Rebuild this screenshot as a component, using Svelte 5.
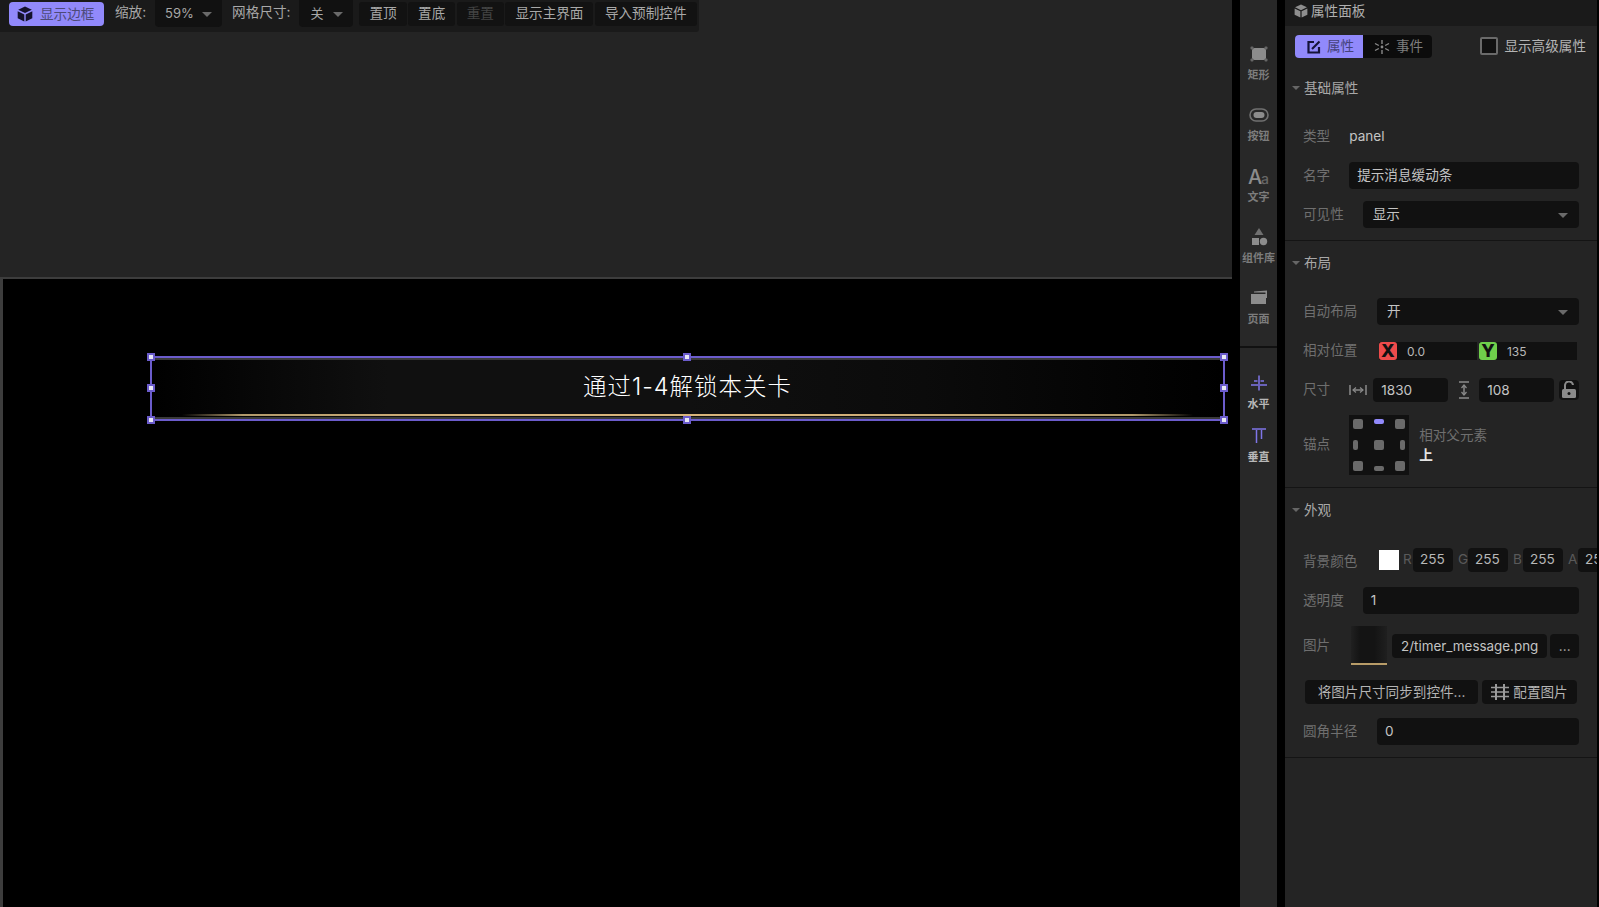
<script>
  const tools = [
    { id: 'rect', label: '矩形' },
    { id: 'btn', label: '按钮' },
    { id: 'text', label: '文字' },
    { id: 'lib', label: '组件库' },
    { id: 'page', label: '页面' }
  ];
  const anchors = ['tl', 'tc', 'tr', 'ml', 'mc', 'mr', 'bl', 'bc', 'br'];
  const handles = ['h-tl', 'h-tc', 'h-tr', 'h-ml', 'h-mr', 'h-bl', 'h-bc', 'h-br'];
  const rgba = [['R', 255], ['G', 255], ['B', 255], ['A', 255]];
</script>

{#snippet cube(size)}
  <svg width={size} height={size} viewBox="0 0 16 16" fill="currentColor">
    <path d="M8 0.500 14.800 3.800 8 7 1.200 3.800Z" />
    <path d="M0.700 5.200 7.300 8.400V15.500L0.700 12.200Z" />
    <path d="M15.300 5.200 8.700 8.400V15.500L15.300 12.200Z" />
  </svg>
{/snippet}

{#snippet caret()}
  <span class="caret"></span>
{/snippet}

<div class="app">
  <main class="canvas">
    <div class="toolbar">
      <button class="show-frame">{@render cube(16)}<span>显示边框</span></button>
      <span class="tb-label zoom-label">缩放:</span>
      <div class="tb-select zoom-select"><span>59%</span>{@render caret()}</div>
      <span class="tb-label grid-label">网格尺寸:</span>
      <div class="tb-select grid-select"><span>关</span>{@render caret()}</div>
      <div class="tb-actions">
        <button class="tb-btn">置顶</button>
        <button class="tb-btn">置底</button>
        <button class="tb-btn off">重置</button>
        <button class="tb-btn">显示主界面</button>
        <button class="tb-btn">导入预制控件</button>
      </div>
    </div>
    <div class="stage">
      <div class="widget">
        <div class="glow"></div>
        <div class="top-edge"></div>
        <div class="bottom-edge"></div>
        <div class="gold"></div>
        <div class="title">通过1-4解锁本关卡</div>
        {#each handles as h}
          <span class="handle {h}"></span>
        {/each}
      </div>
    </div>
  </main>

  <aside class="strip">
    <div class="tool-group first">
      {#each tools as t}
        <div class="tool">
          <svg class="tool-icon" width="24" height="24" viewBox="0 0 24 24" fill="#8c8c8c">
            {#if t.id === 'rect'}
              <rect x="5" y="6" width="14" height="12" rx="2.500" />
              <rect x="3.500" y="4.500" width="3" height="3" rx="1" fill="#666" />
              <rect x="17.500" y="4.500" width="3" height="3" rx="1" fill="#666" />
              <rect x="3.500" y="16.500" width="3" height="3" rx="1" fill="#666" />
              <rect x="17.500" y="16.500" width="3" height="3" rx="1" fill="#666" />
            {:else if t.id === 'btn'}
              <rect x="3" y="6" width="18" height="12" rx="6" fill="none" stroke="#707070" stroke-width="1.600" />
              <rect x="6.500" y="9" width="11" height="6" rx="3" />
            {:else if t.id === 'text'}
              <text x="1" y="20" class="aa-big">A</text>
              <text x="14" y="20" class="aa-small">a</text>
            {:else if t.id === 'lib'}
              <path d="M12 3 16.500 10H7.500Z" fill="#707070" />
              <rect x="5" y="13" width="7" height="7" />
              <circle cx="16.500" cy="16.500" r="3.700" />
            {:else}
              <path d="M7 5.500 20 4.500V12H18.500V6.500H7Z" />
              <rect x="4" y="8" width="15" height="10" />
            {/if}
          </svg>
          <span class="tool-label">{t.label}</span>
        </div>
      {/each}
    </div>
    <div class="tool-group second">
      <div class="tool short">
        <svg class="tool-icon" width="24" height="24" viewBox="0 0 24 24" fill="none" stroke="#7f75e8" stroke-width="1.500">
          <path d="M12 4.500V19.500" /><path d="M4 14H20" stroke-dasharray="7 2 7" /><path d="M7 10H17" stroke-dasharray="3.500 3 3.500" />
        </svg>
        <span class="tool-label on">水平</span>
      </div>
      <div class="tool short">
        <svg class="tool-icon" width="24" height="24" viewBox="0 0 24 24" fill="none" stroke="#7f75e8" stroke-width="1.500">
          <path d="M5 5H19" /><path d="M9.500 6V19" /><path d="M14.500 6V15" />
        </svg>
        <span class="tool-label on">垂直</span>
      </div>
    </div>
  </aside>

  <aside class="panel">
    <header class="panel-head">{@render cube(14)}<span>属性面板</span></header>

    <div class="tabs-row">
      <div class="tabs">
        <div class="tab active">
          <svg width="14" height="14" viewBox="0 0 14 14" fill="none" stroke="#15133a" stroke-width="2.200">
            <path d="M7 2H1.500V12.500H12V7" /><path d="M5 9 12.500 1.500" />
          </svg>
          <span>属性</span>
        </div>
        <div class="tab">
          <svg width="16" height="16" viewBox="0 0 16 16" fill="none" stroke="#8a8a8a" stroke-width="1.400">
            <path d="M8 1V5M8 11V15M1 4.500 4.800 6.500M11.200 9.500 15 11.500M1 11.500 4.800 9.500M11.200 6.500 15 4.500" />
            <circle cx="8" cy="8" r="1.400" fill="#8a8a8a" stroke="none" />
          </svg>
          <span>事件</span>
        </div>
      </div>
      <label class="advanced"><span class="check"></span><span class="adv-text">显示高级属性</span></label>
    </div>

    <section class="section">
      <h3 class="sec-title">{@render caret()}<span>基础属性</span></h3>
      <div class="rows">
        <div class="row"><span class="lab">类型</span><span class="val">panel</span></div>
        <div class="row"><span class="lab">名字</span><div class="field">提示消息缓动条</div></div>
        <div class="row"><span class="lab">可见性</span><div class="field sel"><span class="up">显示</span>{@render caret()}</div></div>
      </div>
    </section>

    <section class="section">
      <h3 class="sec-title">{@render caret()}<span>布局</span></h3>
      <div class="rows">
        <div class="row"><span class="lab w4">自动布局</span><div class="field sel"><span class="up">开</span>{@render caret()}</div></div>
        <div class="row">
          <span class="lab w4">相对位置</span>
          <div class="axes">
            <div class="axis"><span class="badge x">X</span><span class="axis-val">0.0</span></div>
            <div class="axis"><span class="badge y">Y</span><span class="axis-val">135</span></div>
          </div>
        </div>
        <div class="row">
          <span class="lab">尺寸</span>
          <svg class="size-w" width="18" height="12" viewBox="0 0 18 12" fill="none" stroke="#8a8a8a" stroke-width="1.500">
            <path d="M1 1V11M17 1V11M4 6H14" /><path d="M7 3.500 4 6l3 2.500M11 3.500 14 6l-3 2.500" stroke-width="1.200" />
          </svg>
          <div class="field small size-a">1830</div>
          <svg class="size-h" width="12" height="18" viewBox="0 0 12 18" fill="none" stroke="#8a8a8a" stroke-width="1.500">
            <path d="M1 1H11M1 17H11M6 4V14" /><path d="M3.500 7 6 4l2.500 3M3.500 11 6 14l2.500-3" stroke-width="1.200" />
          </svg>
          <div class="field small size-b">108</div>
          <div class="lock">
            <svg width="16" height="18" viewBox="0 0 16 18" fill="none">
              <rect x="1" y="8" width="14" height="9" rx="1.500" fill="#8a8a8a" />
              <path d="M4 8V5A4 4 0 0 1 12 4" stroke="#8a8a8a" stroke-width="2" />
              <circle cx="8" cy="12.500" r="1.500" fill="#111" />
            </svg>
          </div>
        </div>
        <div class="row anchor-row">
          <span class="lab">锚点</span>
          <div class="anchor-grid">
            {#each anchors as a}
              <span class="a {a}"></span>
            {/each}
          </div>
          <div class="anchor-info">
            <span class="rel">相对父元素</span>
            <strong class="side">上</strong>
          </div>
        </div>
      </div>
    </section>

    <section class="section">
      <h3 class="sec-title">{@render caret()}<span>外观</span></h3>
      <div class="rows">
        <div class="row color-row">
          <span class="lab w4">背景颜色</span>
          <span class="swatch"></span>
          {#each rgba as [k, v]}
            <span class="chan">{k}</span><span class="chan-val">{v}</span>
          {/each}
        </div>
        <div class="row"><span class="lab">透明度</span><div class="field num">1</div></div>
        <div class="row image-row">
          <span class="lab image-lab">图片</span>
          <div class="thumb"></div>
          <div class="file">2/timer_message.png</div>
          <div class="more">...</div>
        </div>
        <div class="row btn-row">
          <div class="wide-btn sync">将图片尺寸同步到控件...</div>
          <div class="wide-btn conf">
            <svg width="18" height="16" viewBox="0 0 18 16" fill="none" stroke="#9a9a9a" stroke-width="2">
              <path d="M0 3.500H18M0 8H18M0 12.500H18" stroke-width="1.500" /><path d="M5 0V16M13 0V16" />
            </svg>
            <span>配置图片</span>
          </div>
        </div>
        <div class="row"><span class="lab w4">圆角半径</span><div class="field num">0</div></div>
      </div>
    </section>
  </aside>
</div>

<style>
  :global(body) {
    margin: 0;
    background: #000;
    overflow: hidden;
  }
  .app {
    display: flex;
    width: 1599px;
    height: 907px;
    overflow: hidden;
    background: #000;
    font-family: "Inter", "Noto Sans CJK SC", sans-serif;
    font-size: 13.6px;
    color: #b4b4b4;
  }
  button {
    font: inherit;
    border: 0;
    padding: 0;
  }

  /* canvas */
  .canvas {
    position: relative;
    width: 1232px;
    flex: none;
    display: flex;
    flex-direction: column;
    padding-top: 277px;
    box-sizing: border-box;
    background: #242424;
  }
  .toolbar {
    position: absolute;
    left: 0;
    top: 0;
    width: 699px;
    height: 32px;
    box-sizing: border-box;
    padding: 2px 0 0 9px;
    display: flex;
    align-items: flex-start;
    background: #1a1a1a;
    border-radius: 0 0 3px 0;
  }
  .show-frame {
    width: 95px;
    height: 24px;
    padding: 0 0 0 8px;
    background: #9189fb;
    border-radius: 4px;
    color: #14122c;
    display: flex;
    align-items: center;
    box-sizing: border-box;
    gap: 7px;
  }
  .show-frame span {
    color: #4d4a78;
    padding-bottom: 3px;
  }
  .tb-label {
    line-height: 20px;
    color: #a8a8a8;
  }
  .zoom-label {
    margin-left: 11px;
  }
  .grid-label {
    margin-left: 10px;
  }
  .tb-select {
    height: 27px;
    margin-top: -2px;
    background: #111;
    border-radius: 0 0 4px 4px;
    display: flex;
    align-items: center;
    justify-content: space-between;
    box-sizing: border-box;
    color: #a8a8a8;
  }
  .tb-select span:first-child {
    padding-bottom: 2px;
    font-size: 13px;
  }
  .zoom-select {
    width: 67px;
    margin-left: 9px;
    padding: 0 10px 0 10px;
  }
  .grid-select {
    width: 54px;
    margin-left: 9px;
    padding: 0 10px 0 11px;
  }
  .tb-actions {
    display: flex;
    gap: 1.500px;
    margin-left: 6px;
  }
  .tb-btn {
    height: 24px;
    padding: 0 10px 4px;
    background: #121212;
    color: #a8a8a8;
    border-radius: 3px;
    white-space: nowrap;
    box-sizing: border-box;
  }
  .tb-btn.off {
    color: #444;
  }
  .stage {
    position: relative;
    flex: 1;
    background: #000;
    border-top: 2px solid #3d3d3d;
    border-left: 3px solid #3d3d3d;
  }
  .widget {
    position: absolute;
    left: 147px;
    top: 77px;
    width: 1075px;
    height: 65px;
    box-sizing: border-box;
    border: 2px solid #6b5ccc;
  }
  .glow {
    position: absolute;
    inset: 0;
    background: linear-gradient(90deg, #000 0%, #101010 22%, #101010 50%, #0b0b0b 72%, #000 100%);
  }
  .top-edge,
  .bottom-edge {
    position: absolute;
    left: 0;
    right: 0;
    height: 2px;
    background: #3a3a3a;
  }
  .top-edge {
    top: 0;
  }
  .bottom-edge {
    bottom: 0;
  }
  .gold {
    position: absolute;
    left: 30px;
    right: 30px;
    bottom: 3px;
    height: 2px;
    background: linear-gradient(90deg, transparent 0%, #b29a6b 6%, #d8b47a 30%, #d8b47a 60%, #b29a6b 94%, transparent 100%);
  }
  .title {
    position: absolute;
    left: 0;
    right: 0;
    top: 12px;
    text-align: center;
    font-size: 23.500px;
    line-height: 34px;
    font-weight: 300;
    letter-spacing: 1px;
    color: #fff;
  }
  .handle {
    position: absolute;
    width: 4px;
    height: 4px;
    box-sizing: content-box;
    background: #e8e8f4;
    border: 2px solid #6b5ccc;
  }
  .h-tl { left: -5px; top: -5px; }
  .h-tc { left: 531px; top: -5px; }
  .h-tr { right: -5px; top: -5px; }
  .h-ml { left: -5px; top: 26px; }
  .h-mr { right: -5px; top: 26px; }
  .h-bl { left: -5px; bottom: -5px; }
  .h-bc { left: 531px; bottom: -5px; }
  .h-br { right: -5px; bottom: -5px; }

  /* tool strip */
  .strip {
    width: 37px;
    flex: none;
    margin-left: 8px;
    background: #282828;
    display: flex;
    flex-direction: column;
  }
  .tool-group {
    display: flex;
    flex-direction: column;
    align-items: center;
  }
  .tool-group.first {
    padding: 36px 0 5px;
    border-bottom: 2px solid #111;
  }
  .tool-group.second {
    padding-top: 17px;
  }
  .tool {
    height: 61px;
    width: 37px;
    display: flex;
    flex-direction: column;
    align-items: center;
    padding-top: 6px;
    box-sizing: border-box;
  }
  .tool.short {
    height: 53px;
  }
  .tool-label {
    font-size: 11px;
    line-height: 18px;
    font-weight: 700;
    color: #7c7c7c;
    white-space: nowrap;
  }
  .tool-label.on {
    color: #b8b8b8;
  }
  .aa-big {
    font-size: 20px;
    font-weight: 500;
    fill: #8c8c8c;
  }
  .aa-small {
    font-size: 14px;
    font-weight: 500;
    fill: #666;
  }

  /* panel */
  .panel {
    width: 312px;
    flex: none;
    margin-left: 8px;
    background: #242424;
    overflow: hidden;
  }
  .panel-head {
    height: 26px;
    box-sizing: border-box;
    background: #1a1a1a;
    display: flex;
    align-items: center;
    gap: 3px;
    padding: 0 0 4px 9px;
    color: #8e8e8e;
  }
  .panel-head span {
    color: #b0b0b0;
    padding-bottom: 3px;
  }
  .tabs-row {
    height: 40px;
    box-sizing: border-box;
    padding: 9px 11px 0 10px;
    display: flex;
    justify-content: space-between;
    align-items: flex-start;
  }
  .tabs {
    display: flex;
    width: 137px;
    height: 23px;
    background: #0c0c0c;
    border-radius: 4px;
    overflow: hidden;
  }
  .tab {
    display: flex;
    align-items: center;
    gap: 6px;
    padding-left: 11px;
    flex: 1;
    color: #7e7e7e;
  }
  .tab span {
    padding-bottom: 3px;
  }
  .tab.active {
    flex: 0 0 68px;
    box-sizing: border-box;
    padding-left: 12px;
    background: #9189fb;
    color: #45427a;
  }
  .advanced {
    display: flex;
    align-items: center;
    gap: 6px;
    height: 18px;
    margin-top: 2px;
    color: #b4b4b4;
  }
  .adv-text {
    padding-bottom: 3px;
  }
  .check {
    width: 18px;
    height: 18px;
    box-sizing: border-box;
    border: 2px solid #6a6a6a;
    border-radius: 2px;
    background: #111;
  }
  .section {
    padding: 12px 18px;
    border-bottom: 1px solid #141414;
  }
  .sec-title {
    margin: 0 0 25px -11px;
    height: 20px;
    padding-bottom: 3px;
    box-sizing: border-box;
    display: flex;
    align-items: center;
    gap: 4px;
    font: inherit;
    color: #a8a8a8;
  }
  .rows {
    display: flex;
    flex-direction: column;
    gap: 12px;
  }
  .row {
    display: flex;
    align-items: center;
    min-height: 27px;
  }
  .lab {
    flex: none;
    margin-right: 19px;
    padding-bottom: 4px;
    color: #6f6f6f;
    white-space: nowrap;
  }
  .lab.w4 {
    margin-right: 19.600px;
  }
  .val {
    color: #c4c4c4;
    padding-bottom: 2px;
  }
  .field {
    flex: 1;
    height: 27px;
    box-sizing: border-box;
    padding: 0 8px 4px;
    background: #111;
    border-radius: 4px;
    display: flex;
    align-items: center;
    color: #c4c4c4;
  }
  .field.num {
    padding-bottom: 2px;
  }
  .field.sel {
    justify-content: space-between;
    padding: 0 11px 0 10px;
  }
  .up {
    padding-bottom: 4px;
  }
  .field.small {
    flex: none;
    width: 75px;
    height: 24px;
    padding: 0 8px;
  }
  .caret {
    display: inline-block;
    flex: none;
    width: 0;
    height: 0;
    border-left: 5px solid transparent;
    border-right: 5px solid transparent;
    border-top: 5px solid #6a6a6a;
    margin-top: 2px;
  }
  .sec-title .caret {
    border-left-width: 4px;
    border-right-width: 4px;
    border-top-width: 4px;
    border-top-color: #666;
    margin-top: 3px;
  }
  .axes {
    display: flex;
    gap: 2px;
    margin-left: 2px;
  }
  .axis {
    width: 98px;
    height: 18px;
    display: flex;
    background: #111;
  }
  .axis-val {
    margin-left: 10px;
    line-height: 20px;
    font-size: 12px;
    color: #b8b8b8;
  }
  .badge {
    width: 18px;
    height: 18px;
    border-radius: 3px;
    color: #111;
    font-weight: 800;
    font-size: 18px;
    line-height: 18px;
    text-align: center;
  }
  .badge.x {
    background: #ee4b4b;
  }
  .badge.y {
    background: #6fcf4b;
  }
  .size-w {
    flex: none;
    margin-right: 6px;
  }
  .size-h {
    flex: none;
    margin: 0 9px 0 10px;
  }
  .lock {
    width: 20px;
    height: 20px;
    margin-left: 5px;
    background: #111;
    border-radius: 4px;
    display: flex;
    align-items: center;
    justify-content: center;
  }
  .anchor-grid {
    flex: none;
    width: 60px;
    height: 60px;
    box-sizing: border-box;
    padding: 4px;
    background: #111;
    display: grid;
    grid-template-columns: repeat(3, 1fr);
    grid-template-rows: repeat(3, 1fr);
    place-items: center;
  }
  .a {
    display: block;
    width: 10px;
    height: 10px;
    background: #6a6a6a;
    border-radius: 2px;
  }
  .tl, .ml, .bl { justify-self: start; }
  .tr, .mr, .br { justify-self: end; }
  .tl, .tc, .tr { align-self: start; }
  .bl, .bc, .br { align-self: end; }
  .tc, .bc {
    height: 5px;
    border-radius: 2px;
  }
  .ml, .mr {
    width: 5px;
    border-radius: 2px;
  }
  .tc {
    background: #9189fb;
  }
  .anchor-info {
    margin-left: 10px;
    display: flex;
    flex-direction: column;
  }
  .rel {
    color: #6f6f6f;
    line-height: 20px;
  }
  .side {
    color: #e4e4e4;
    line-height: 20px;
    font-weight: 700;
  }
  .color-row {
    min-height: 30px;
    box-sizing: border-box;
    padding-top: 3px;
    align-items: flex-start;
  }
  .color-row .lab {
    align-self: center;
  }
  .swatch {
    flex: none;
    width: 20px;
    height: 20px;
    margin: 2px 4px 0 2px;
    background: #fff;
  }
  .chan {
    flex: none;
    width: 10px;
    line-height: 22px;
    color: #5a5a5a;
  }
  .chan-val {
    flex: none;
    width: 40px;
    height: 24px;
    line-height: 22px;
    box-sizing: border-box;
    padding-left: 7px;
    margin-right: 5px;
    background: #111;
    border-radius: 4px;
    color: #b8b8b8;
    overflow: hidden;
  }
  .image-row {
    min-height: 39px;
  }
  .image-lab {
    margin-right: 21px;
  }
  .thumb {
    flex: none;
    width: 36px;
    height: 39px;
    margin-right: 5px;
    background: linear-gradient(90deg, #202020, #141414 25%, #141414 65%, #1f1f1f);
    border-bottom: 2px solid #b89c68;
    box-sizing: border-box;
  }
  .file {
    flex: none;
    width: 155px;
    height: 24px;
    line-height: 24px;
    font-size: 13.400px;
    text-align: center;
    background: #111;
    border-radius: 4px;
    color: #c4c4c4;
  }
  .more {
    flex: none;
    width: 29px;
    height: 24px;
    line-height: 24px;
    margin-left: 3px;
    text-align: center;
    background: #111;
    border-radius: 4px;
    color: #a8a8a8;
  }
  .btn-row {
    min-height: 29px;
    align-items: flex-start;
    padding-top: 3px;
    box-sizing: border-box;
    gap: 4px;
    margin-left: 2px;
  }
  .wide-btn {
    height: 24px;
    background: #111;
    border-radius: 4px;
    display: flex;
    align-items: center;
    justify-content: center;
    color: #b4b4b4;
    white-space: nowrap;
  }
  .sync {
    width: 173px;
    padding-bottom: 3px;
    box-sizing: border-box;
  }
  .conf {
    width: 95px;
    gap: 4px;
  }
  .conf span {
    padding-bottom: 3px;
  }
</style>
